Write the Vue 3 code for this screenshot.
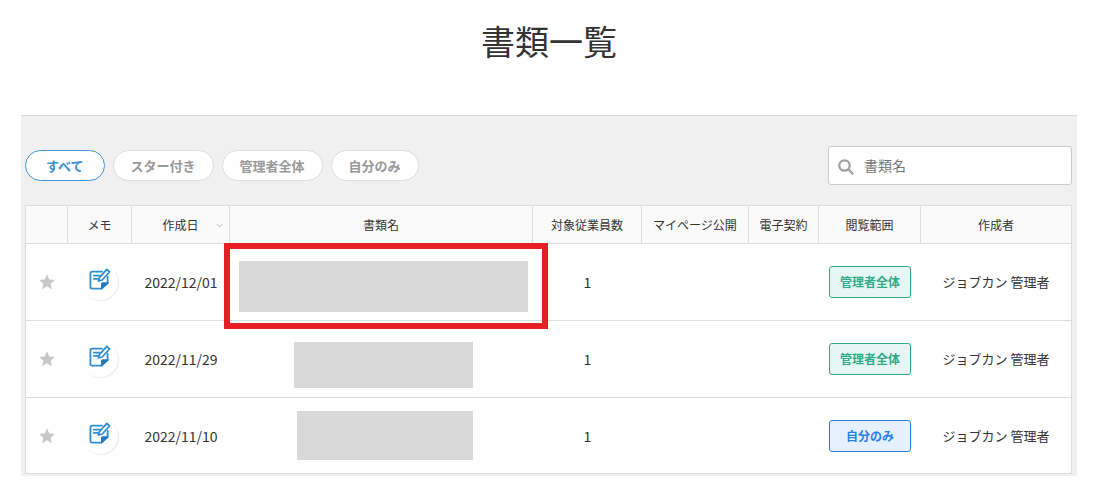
<script setup>
import { ref } from 'vue'

const filters = ['すべて', 'スター付き', '管理者全体', '自分のみ']
const active = ref('すべて')
const keyword = ref('')

const rows = [
  { date: '2022/12/01', count: 1, scope: '管理者全体', kind: 'all', author: 'ジョブカン 管理者', marked: true, mask: { left: 9, top: 17, width: 289, height: 51 } },
  { date: '2022/11/29', count: 1, scope: '管理者全体', kind: 'all', author: 'ジョブカン 管理者', marked: false, mask: { left: 64, top: 21, width: 179, height: 46 } },
  { date: '2022/11/10', count: 1, scope: '自分のみ', kind: 'self', author: 'ジョブカン 管理者', marked: false, mask: { left: 67, top: 13, width: 176, height: 49 } },
]

const maskStyle = (m) => ({
  left: m.left + 'px',
  top: m.top + 'px',
  width: m.width + 'px',
  height: m.height + 'px',
})
</script>

<template>
  <main class="page">
    <h1 class="title">書類一覧</h1>
    <section class="panel">
      <div class="toolbar">
        <div class="filters">
          <button
            v-for="f in filters"
            :key="f"
            type="button"
            class="pill"
            :class="{ active: f === active }"
            @click="active = f"
          >{{ f }}</button>
        </div>
        <label class="search">
          <svg class="search-icon" viewBox="0 0 16 16" aria-hidden="true">
            <circle cx="6.5" cy="6.5" r="5.2" />
            <path d="M10.5 10.5 L14.6 14.6" />
          </svg>
          <input v-model="keyword" type="text" placeholder="書類名" aria-label="書類名" />
        </label>
      </div>

      <table class="docs">
        <colgroup>
          <col class="c-star" />
          <col class="c-memo" />
          <col class="c-date" />
          <col />
          <col class="c-count" />
          <col class="c-public" />
          <col class="c-sign" />
          <col class="c-scope" />
          <col class="c-author" />
        </colgroup>
        <thead>
          <tr>
            <th></th>
            <th>メモ</th>
            <th class="sortable">
              作成日
              <svg class="chevron" viewBox="0 0 8 5" aria-hidden="true"><path d="M1 1 L4 4 L7 1" /></svg>
            </th>
            <th>書類名</th>
            <th>対象従業員数</th>
            <th>マイページ公開</th>
            <th>電子契約</th>
            <th>閲覧範囲</th>
            <th>作成者</th>
          </tr>
        </thead>
        <tbody>
          <tr v-for="row in rows" :key="row.date">
            <td>
              <button type="button" class="star" aria-label="スター">
                <svg viewBox="0 0 16 16" aria-hidden="true">
                  <path d="M8 0.3 L10.2 5.5 L15.9 6 L11.6 9.7 L12.9 15.3 L8 12.3 L3.1 15.3 L4.4 9.7 L0.1 6 L5.8 5.5 Z" />
                </svg>
              </button>
            </td>
            <td>
              <button type="button" class="memo" aria-label="メモ">
                <svg viewBox="0 0 22 22" aria-hidden="true">
                  <path class="sheet" d="M13 3.6 H3.2 Q1.4 3.6 1.4 5.4 V18.8 Q1.4 20.6 3.2 20.6 H12.6 L18.6 15.2 V9" />
                  <path class="fold" d="M12 21.4 V16 Q12 14.2 13.8 14.2 H19.4 V15.6 Z" />
                  <path class="lines" d="M4.8 7.6 H11 M4.8 10.8 H8.6" />
                  <path class="pencil" d="M9.4 13 L10.4 9.6 L17.8 1.4 L20.6 4 L13.2 12 Z" />
                </svg>
              </button>
            </td>
            <td class="figure">{{ row.date }}</td>
            <td class="name">
              <span class="mask" :style="maskStyle(row.mask)"></span>
              <span v-if="row.marked" class="marker"></span>
            </td>
            <td class="figure">{{ row.count }}</td>
            <td></td>
            <td></td>
            <td><span class="badge" :class="row.kind">{{ row.scope }}</span></td>
            <td>{{ row.author }}</td>
          </tr>
        </tbody>
      </table>
    </section>
  </main>
</template>

<style>
body {
  background: #fff;
}
</style>

<style scoped>
.page,
.page button,
.page input {
  font-family: "Noto Sans CJK JP", sans-serif;
}
.page {
  padding: 0 20px 0 21px;
  color: #333;
}
.page * {
  box-sizing: border-box;
}
.title {
  margin: 0;
  padding: 16px 0 49px;
  font-size: 34px;
  line-height: 50px;
  font-weight: 400;
  text-align: center;
}
.panel {
  padding: 0 5px 2px 4px;
  border-top: 1px solid #dadada;
  background: #f0f0f0;
}
.toolbar {
  display: flex;
  align-items: center;
  justify-content: space-between;
  height: 89px;
  padding-top: 9px;
}
.filters {
  display: flex;
  gap: 8px;
}
.pill {
  height: 31px;
  padding: 0 17px;
  border: 1px solid #ddd;
  border-radius: 16px;
  background: #fff;
  color: #999;
  font-size: 13px;
  line-height: 29px;
  font-weight: 700;
}
.pill.active {
  padding: 0 20px;
  border-color: #3f97d9;
  color: #3f8fd8;
}
.search {
  display: flex;
  align-items: center;
  gap: 10px;
  width: 244px;
  height: 39px;
  padding: 0 9px;
  border: 1px solid #ccc;
  border-radius: 3px;
  background: #fff;
}
.search-icon {
  flex: none;
  width: 16px;
  height: 16px;
  margin-top: 4px;
  fill: none;
  stroke: #a0a0a0;
  stroke-width: 2.2;
  stroke-linecap: round;
}
.search input {
  flex: 1;
  min-width: 0;
  padding: 0;
  border: 0;
  outline: 0;
  background: transparent;
  color: #333;
  font-size: 14px;
  line-height: 20px;
}
.search input::placeholder {
  color: #757575;
  opacity: 1;
}
.docs {
  width: 100%;
  table-layout: fixed;
  border-collapse: separate;
  border-spacing: 0;
  border: 1px solid #ddd;
  border-bottom: 0;
  background: #fff;
}
.c-star { width: 42px; }
.c-memo { width: 64px; }
.c-date { width: 98px; }
.c-count { width: 109px; }
.c-public { width: 107px; }
.c-sign { width: 70px; }
.c-scope { width: 102px; }
.c-author { width: 150px; }
th,
td {
  padding: 0;
  border-bottom: 1px solid #ddd;
  text-align: center;
  vertical-align: middle;
}
th {
  height: 38px;
  border-right: 1px solid #ddd;
  background: #fafafa;
  font-size: 12px;
  line-height: 18px;
  font-weight: 400;
  white-space: nowrap;
}
th:last-child {
  border-right: 0;
}
.sortable {
  position: relative;
}
.chevron {
  position: absolute;
  top: 17px;
  right: 6px;
  width: 7px;
  height: 5px;
  fill: none;
  stroke: #aaa;
}
td {
  height: 77px;
  font-size: 13px;
  line-height: 20px;
}
tbody tr:last-child td {
  height: 76px;
}
.figure {
  font-size: 14px;
}
.star,
.memo {
  display: block;
  margin: 0 auto;
  padding: 0;
  border: 0;
  background: transparent;
}
.star {
  width: 16px;
  height: 16px;
}
.star svg {
  display: block;
  fill: #c8c8c8;
}
.memo {
  width: 36px;
  height: 36px;
  padding: 4px 7px 10px;
  border-radius: 50%;
  background: #fff;
  box-shadow: 1px 1px 1px #ececec;
}
.memo svg {
  display: block;
  width: 22px;
  height: 22px;
  fill: none;
  stroke: #2f8fd6;
  stroke-width: 1.8;
  stroke-linejoin: round;
  stroke-linecap: round;
}
.memo .fold {
  fill: #2478bd;
  stroke: none;
}
.memo .pencil {
  fill: #fff;
}
.name {
  position: relative;
}
.mask {
  position: absolute;
  background: #d9d9d9;
}
.marker {
  position: absolute;
  z-index: 1;
  inset: -1px -15px -9px -6px;
  border: 6px solid #e81e25;
}
.badge {
  display: block;
  width: 82px;
  margin: 0 auto;
  border: 1px solid;
  border-radius: 3px;
  font-size: 12px;
  line-height: 30px;
  font-weight: 700;
}
.badge.all {
  border-color: #2fab89;
  background: #e6f6f3;
  color: #2fab89;
}
.badge.self {
  border-color: #2680eb;
  background: #e5f1fe;
  color: #2680eb;
}
</style>
